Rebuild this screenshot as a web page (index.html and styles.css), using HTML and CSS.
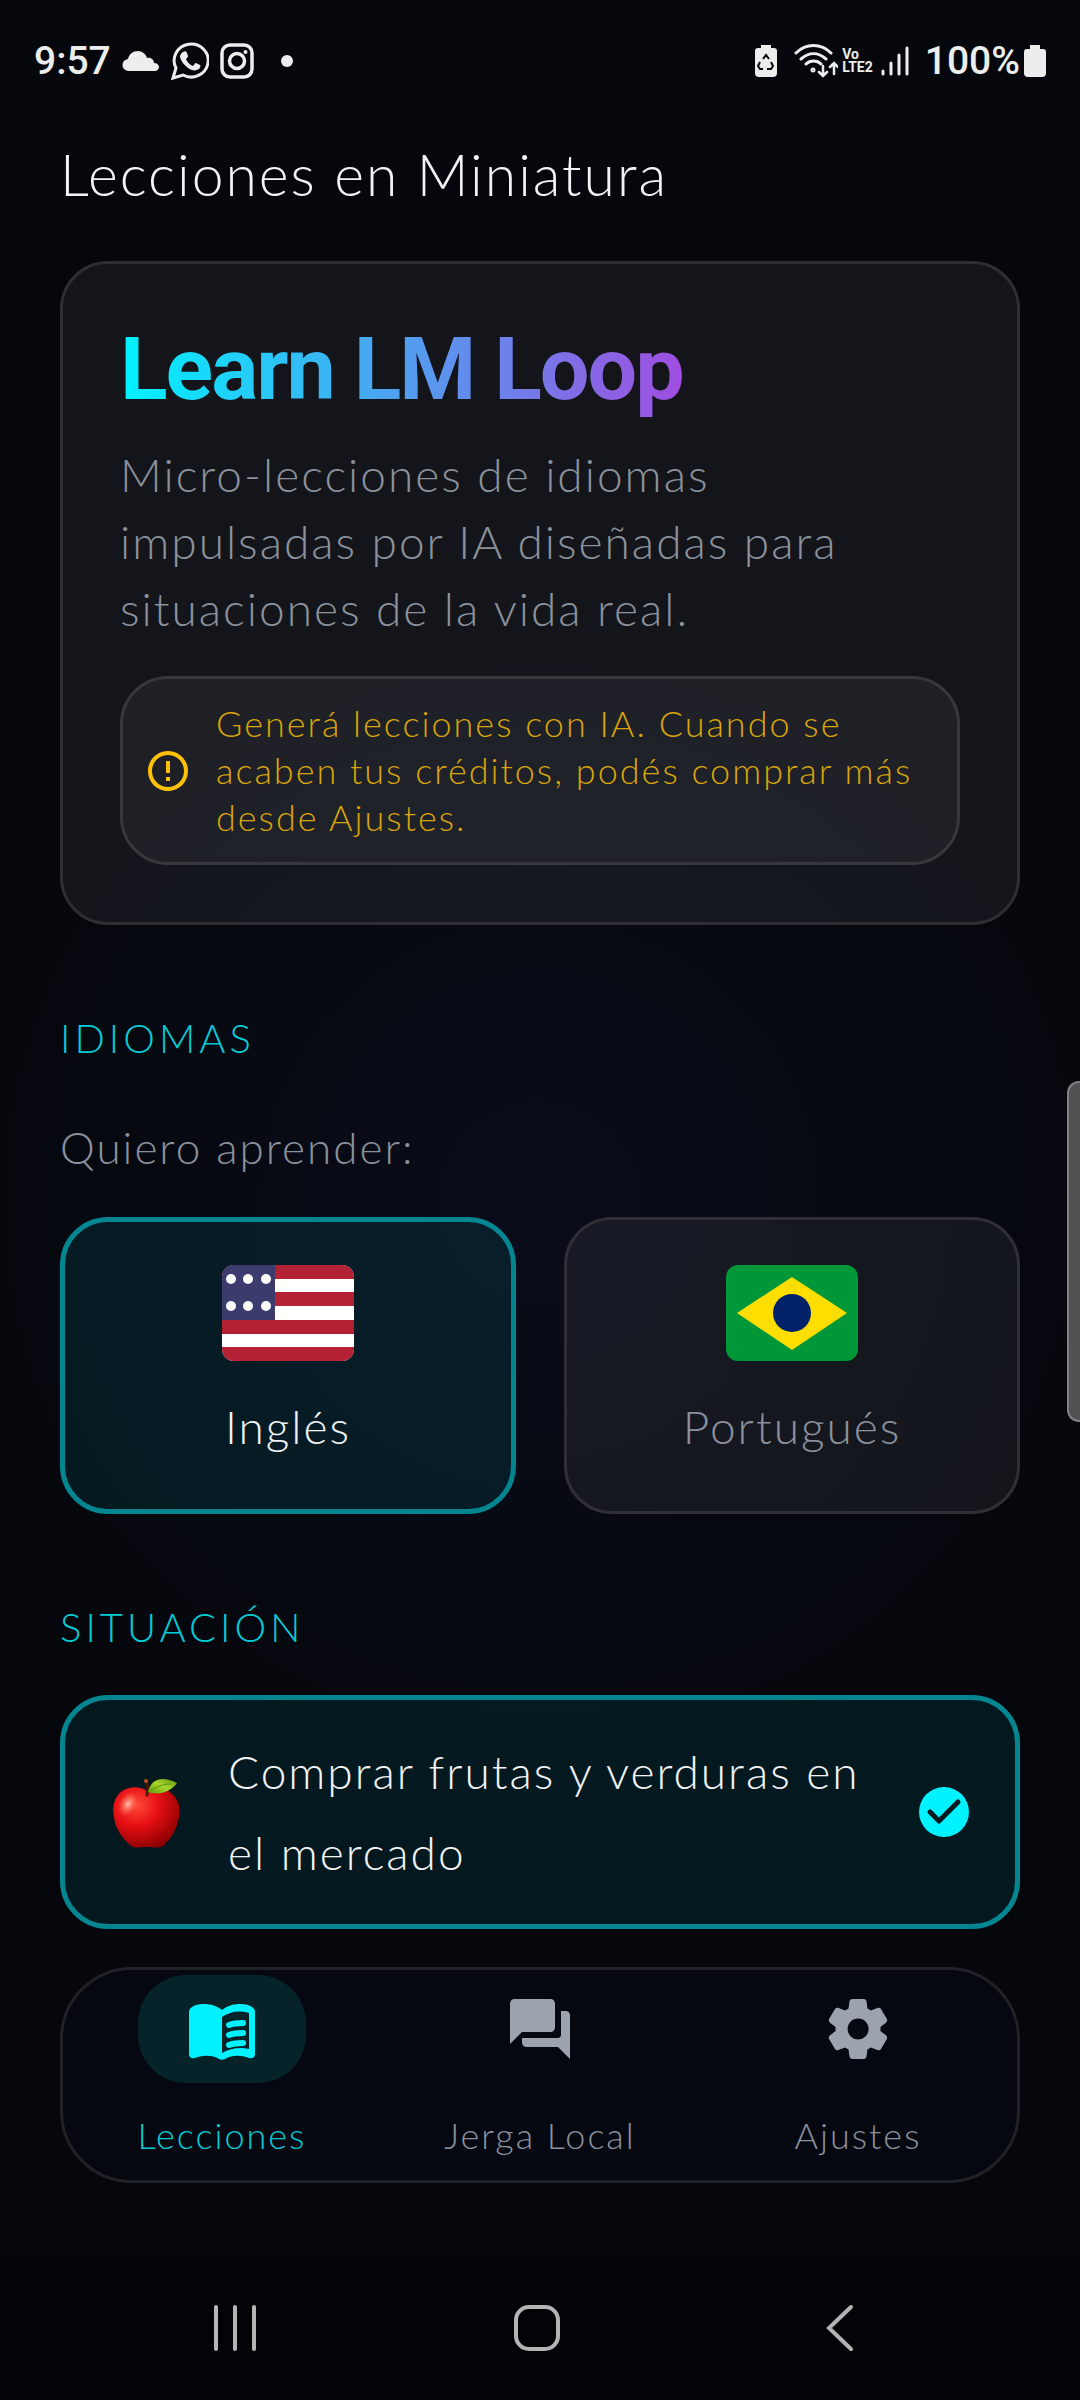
FILE: index.html
```
<!DOCTYPE html>
<html lang="es">
  <head>
    <meta charset="UTF-8" />
    <meta name="viewport" content="width=device-width, initial-scale=1.0" />
    <title>Learn LM Loop</title>
    <link rel="stylesheet" href="styles.css">
  </head>
  <body>
    <header class="status-bar">
      <div class="status-left">
        <span class="clock">9:57</span>
        <svg width="38" height="24" viewBox="0 0 38 24" fill="currentColor"><path d="M7 22a6 6 0 0 1-1-12C7 5 11 2 16 2c4 0 8 3 9 7 4-1 7 2 7 5 3 0 5 2 5 4s-2 4-4 4z" /></svg>
        <svg width="38" height="40" viewBox="0 0 38 40" fill="none" stroke="currentColor" stroke-width="3">
          <path d="M2 37l3-10A17 16.500 0 1 1 12 34z" />
          <path d="M12 11c2-1 3-1 4 1l1 3c0 1-1 2-2 3 1 3 4 6 7 7 1-1 2-3 3-3l4 2c1 1 0 3-1 4-3 2-7 2-11-1-4-3-7-7-8-11 0-2 1-4 3-5z" fill="currentColor" stroke="none" />
        </svg>
        <svg width="34" height="36" viewBox="0 0 34 36" fill="none" stroke="currentColor" stroke-width="3.500">
          <rect x="2" y="2" width="30" height="32" rx="8" />
          <circle cx="17" cy="18" r="7.500" />
          <circle cx="25.500" cy="9" r="2" fill="currentColor" stroke="none" />
        </svg>
        <span class="status-dot"></span>
      </div>
      <div class="status-right">
        <svg width="24" height="34" viewBox="0 0 24 34">
          <path d="M7 1h10v3h3a3 3 0 0 1 3 3v22a4 4 0 0 1-4 4H5a4 4 0 0 1-4-4V7a3 3 0 0 1 3-3h3z" fill="currentColor" />
          <path d="M9 15l3-4 3 4M17 18l2 4-2 3h-4M9 25H6l-2-3 2-4" fill="none" stroke="#05070c" stroke-width="2" />
        </svg>
        <svg class="wifi" width="44" height="36" viewBox="0 0 44 36" fill="none" stroke="currentColor" stroke-width="3" stroke-linecap="round">
          <path d="M2 10c10-10 25-10 35 0M7 16c8-7 17-7 25 0M12 21c4-4 11-4 15 0" />
          <circle cx="19" cy="27" r="1" />
          <path d="M29 23v10m-4-4l4 4 4-4M40 31V20m-4 4l4-4 4 4" stroke-width="2.500" />
        </svg>
        <span class="volte">Vo<br>LTE2</span>
        <svg class="signal" width="28" height="32" viewBox="0 0 28 32" stroke="currentColor" stroke-width="3" stroke-linecap="round"><path d="M2 26v3M10 18v11M18 10v19M26 3v26" /></svg>
        <span class="battery-level">100%</span>
        <svg width="22" height="34" viewBox="0 0 22 34" fill="currentColor"><path d="M6 1h10v4h3a3 3 0 0 1 3 3v21a4 4 0 0 1-4 4H4a4 4 0 0 1-4-4V8a3 3 0 0 1 3-3h3z" /></svg>
      </div>
    </header>

    <main class="content">
      <h2 class="page-title">Lecciones en Miniatura</h2>

      <section class="hero">
        <h1>Learn LM Loop</h1>
        <p class="lead">Micro-lecciones de idiomas impulsadas por IA diseñadas para situaciones de la vida real.</p>
        <div class="notice">
          <svg width="48" height="48" viewBox="0 0 24 24" fill="currentColor"><path d="M11 15h2v2h-2zm0-8h2v6h-2zm.99-5C6.470 2 2 6.480 2 12s4.470 10 9.990 10C17.520 22 22 17.520 22 12S17.520 2 11.990 2zM12 20c-4.420 0-8-3.580-8-8s3.580-8 8-8 8 3.580 8 8-3.580 8-8 8z" /></svg>
          <p>Generá lecciones con IA. Cuando se acaben tus créditos, podés comprar más desde Ajustes.</p>
        </div>
      </section>

      <h3 class="section-title">IDIOMAS</h3>
      <p class="question">Quiero aprender:</p>
      <div class="languages">
        <button class="language selected" type="button" aria-pressed="true">
          <svg class="flag" width="132" height="96" viewBox="0 0 132 96">
            <rect width="132" height="96" fill="#fff" />
            <path d="M0 0h132v14H0zM0 27h132v14H0zM0 55h132v14H0zM0 82h132v14H0z" fill="#b22234" />
            <rect width="53" height="55" fill="#3c3b6e" />
            <g fill="#fff">
              <circle cx="9" cy="14" r="5" /><circle cx="26" cy="14" r="5" /><circle cx="44" cy="14" r="5" />
              <circle cx="9" cy="41" r="5" /><circle cx="26" cy="41" r="5" /><circle cx="44" cy="41" r="5" />
            </g>
          </svg>
          <span>Inglés</span>
        </button>
        <button class="language" type="button" aria-pressed="false">
          <svg class="flag" width="132" height="96" viewBox="0 0 132 96">
            <rect width="132" height="96" fill="#009739" />
            <path d="M66 12l55 36-55 37-55-37z" fill="#fedd00" />
            <circle cx="66" cy="48" r="19" fill="#012169" />
          </svg>
          <span>Portugués</span>
        </button>
      </div>

      <h3 class="section-title">SITUACIÓN</h3>
      <button class="situation selected" type="button" aria-pressed="true">
        <svg class="apple" width="72" height="76" viewBox="0 0 72 76">
          <defs>
            <radialGradient id="skin" cx="0.35" cy="0.3" r="0.75">
              <stop offset="0" stop-color="#ff4a3a" />
              <stop offset="0.45" stop-color="#e60f14" />
              <stop offset="1" stop-color="#8c0000" />
            </radialGradient>
            <linearGradient id="leaf" x1="0" y1="1" x2="1" y2="0">
              <stop offset="0" stop-color="#5f9a10" />
              <stop offset="0.5" stop-color="#a9d62b" />
              <stop offset="1" stop-color="#5c9410" />
            </linearGradient>
            <radialGradient id="shine">
              <stop offset="0" stop-color="#ffc0b0" />
              <stop offset="1" stop-color="#ff6a4a" stop-opacity="0" />
            </radialGradient>
          </defs>
          <path d="M36 17c6-4 15-5 23 1 8 6 11 15 9 25-2 12-8 22-15 28-4 4-9 2-17 2s-13 2-17-2C11 64 4 54 3 43 1 33 3 23 11 17c8-5 18-5 25 0z" fill="url(#skin)" />
          <ellipse cx="17" cy="30" rx="9" ry="13" fill="url(#shine)" transform="rotate(30 17 30)" />
          <path d="M36 21c1-4 1-8 0-12" fill="none" stroke="#4a1608" stroke-width="3" stroke-linecap="round" />
          <circle cx="35" cy="7" r="2" fill="#b5551c" />
          <path d="M37 18c2-11 12-18 29-9-6 8-17 13-29 9z" fill="url(#leaf)" />
          <path d="M40 16c7-4 13-6 20-6" fill="none" stroke="#5c9410" />
        </svg>
        <span class="situation-name">Comprar frutas y verduras en el mercado</span>
        <svg class="check" width="50" height="50" viewBox="0 0 50 50">
          <circle cx="25" cy="25" r="25" fill="#00f2ff" />
          <path d="M11 25l9 9 19-19" fill="none" stroke="#06191f" stroke-width="5" stroke-linecap="round" stroke-linejoin="round" />
        </svg>
      </button>
    </main>

    <nav class="tabs">
      <a class="tab active" href="#">
        <span class="tab-icon">
          <svg width="72" height="72" viewBox="0 0 72 72">
            <path d="M36 17C29 10 12 9 6 14c-2 1-3 3-3 5v42c0 4 3 5 6 4 8-3 18-3 24 1 2 1 4 1 6 0 6-4 16-4 24-1 3 1 6 0 6-4V19c0-2-1-4-3-5-6-5-23-4-30 3z" fill="currentColor" />
            <path d="M36 24c7-5 17-7 27-4v36c-9-2-18-1-27 4z" fill="#07232a" />
            <path d="M43 32c5-2 10-2 14-2M43 42c5-2 10-2 14-2M43 52c5-2 10-2 14-2" fill="none" stroke="currentColor" stroke-width="6" stroke-linecap="round" />
          </svg>
        </span>
        <span>Lecciones</span>
      </a>
      <a class="tab" href="#">
        <span class="tab-icon">
          <svg width="72" height="72" viewBox="0 0 24 24" fill="currentColor"><path d="M21.500 6H19v8c0 .55-.45 1-1 1H6v1.500c0 .83.67 1.500 1.500 1.500H18l4 4V7.500c0-.83-.5-1.500-1.500-1.500zM17 11.500v-8c0-.83-.67-1.500-1.500-1.500h-12C2.670 2 2 2.670 2 3.500V17l4-4h9.500c.83 0 1.500-.67 1.500-1.500z" /></svg>
        </span>
        <span>Jerga Local</span>
      </a>
      <a class="tab" href="#">
        <span class="tab-icon">
          <svg width="72" height="72" viewBox="0 0 24 24" fill="currentColor"><path d="M19.500 12c0-.23-.01-.45-.03-.68l1.860-1.410c.4-.3.510-.86.260-1.300l-1.870-3.230c-.25-.44-.79-.62-1.250-.42l-2.150.91c-.37-.26-.76-.49-1.170-.68l-.29-2.310C14.800 2.380 14.370 2 13.870 2h-3.730c-.51 0-.94.38-1 .88l-.29 2.310c-.41.190-.8.420-1.170.68l-2.150-.91c-.46-.2-1-.02-1.250.42L2.410 8.620c-.25.440-.14.990.26 1.300l1.860 1.410c-.02.220-.03.440-.03.670s.01.450.03.680l-1.860 1.410c-.4.300-.51.860-.26 1.300l1.870 3.230c.25.440.79.620 1.250.42l2.150-.91c.37.260.76.490 1.170.68l.29 2.310c.06.500.49.880.99.880h3.730c.5 0 .93-.38.99-.88l.29-2.310c.41-.19.800-.42 1.170-.68l2.150.91c.46.200 1 .02 1.250-.42l1.870-3.230c.25-.44.140-.99-.26-1.300l-1.860-1.410c.03-.23.040-.45.040-.68zm-7.460 3.500c-1.930 0-3.500-1.570-3.500-3.500s1.570-3.500 3.500-3.500 3.500 1.570 3.500 3.500-1.570 3.500-3.500 3.500z" /></svg>
        </span>
        <span>Ajustes</span>
      </a>
    </nav>

    <footer class="system-nav">
      <button type="button" aria-label="Recientes">
        <svg width="44" height="48" viewBox="0 0 44 48" stroke="currentColor" stroke-width="4" stroke-linecap="round"><path d="M3 3v42M22 3v42M41 3v42" /></svg>
      </button>
      <button type="button" aria-label="Inicio">
        <svg width="48" height="48" viewBox="0 0 48 48" fill="none" stroke="currentColor" stroke-width="4"><rect x="3" y="3" width="42" height="42" rx="13" /></svg>
      </button>
      <button type="button" aria-label="Atrás">
        <svg width="48" height="48" viewBox="0 0 48 48" fill="none" stroke="currentColor" stroke-width="4" stroke-linecap="round"><path d="M36 3L14 24l22 21" /></svg>
      </button>
    </footer>

    <div class="edge-handle"></div>
  </body>
</html>
```
FILE: styles.css
```
* {
  box-sizing: border-box;
}

body {
  margin: 0;
  min-height: 100vh;
  display: flex;
  flex-direction: column;
  font-family: "Lato", sans-serif;
  font-weight: 300;
  letter-spacing: 2px;
  color: #f2f3f5;
  background: radial-gradient(circle 620px at 50% 50%, #0a0c1a, #05070c) #05070c;
}

h1,
h2,
h3,
p {
  margin: 0;
  font-weight: 300;
}

svg {
  display: block;
  flex-shrink: 0;
}

button {
  font: inherit;
  letter-spacing: inherit;
  color: inherit;
  background: none;
  border: none;
  padding: 0;
}

/* status bar */
.status-bar {
  display: flex;
  justify-content: space-between;
  align-items: center;
  height: 122px;
  padding: 0 34px;
  font-family: "Roboto", sans-serif;
  font-size: 39px;
  font-weight: 500;
  letter-spacing: 0;
  color: #eceeed;
}

.status-left,
.status-right {
  display: flex;
  align-items: center;
}

.status-left {
  gap: 11px;
}

.status-right {
  gap: 4px;
}

.status-dot {
  width: 12px;
  height: 12px;
  margin-left: 16px;
  border-radius: 50%;
  background: #eceeed;
}

.wifi {
  margin-left: 12px;
}

.volte {
  font-size: 14px;
  font-weight: 700;
  line-height: 13px;
}

.signal {
  margin: 0 12px 0 4px;
}

/* content */
.content {
  padding: 0 60px;
}

.page-title {
  margin: 16px 0 51px;
  font-size: 57px;
  line-height: 72px;
}

.hero {
  padding: 57px;
  border: 3px solid #2d2f33;
  border-radius: 48px;
  background: rgba(255, 255, 255, 0.06);
}

.hero h1 {
  width: fit-content;
  font-family: "Roboto", sans-serif;
  font-size: 88px;
  font-weight: 700;
  line-height: 96px;
  letter-spacing: -2px;
  color: transparent;
  background: linear-gradient(90deg, #00f2ff, #a04de0);
  background-clip: text;
  -webkit-background-clip: text;
}

.lead {
  margin: 24px 0 34px;
  padding-right: 60px;
  font-size: 46px;
  line-height: 67px;
  color: #8b919c;
}

.notice {
  display: flex;
  align-items: center;
  gap: 24px;
  padding: 21px;
  border: 3px solid #36383c;
  border-radius: 48px;
  background: rgba(255, 255, 255, 0.05);
  color: #ffc107;
}

.notice p {
  font-size: 36px;
  line-height: 47px;
  color: #d9a50b;
}

.section-title {
  margin-top: 83px;
  font-size: 40px;
  line-height: 60px;
  letter-spacing: 4px;
  color: #03ccd7;
}

.question {
  margin: 49px 0 40px;
  font-size: 44px;
  line-height: 60px;
  color: #8b919c;
}

.languages {
  display: grid;
  grid-template-columns: 1fr 1fr;
  gap: 48px;
}

.language {
  display: flex;
  flex-direction: column;
  align-items: center;
  gap: 36px;
  height: 297px;
  padding-top: 45px;
  border: 3px solid #2f3036;
  border-radius: 48px;
  background: rgba(255, 255, 255, 0.06);
  font-size: 46px;
  line-height: 60px;
  color: #8b919c;
}

.flag {
  border-radius: 12px;
}

.selected {
  border: 5px solid #038690;
  background: rgba(0, 242, 255, 0.08);
  color: #f2f3f5;
}

.language.selected {
  padding-top: 43px;
}

.situation {
  display: flex;
  align-items: center;
  width: 100%;
  margin-top: 38px;
  padding: 31px 46px;
  border-radius: 48px;
  font-size: 46px;
  line-height: 81px;
  text-align: left;
}

.situation-name {
  flex: 1;
  margin: 0 36px 0 45px;
}

/* bottom tabs */
.tabs {
  display: grid;
  grid-template-columns: repeat(3, 1fr);
  margin: 38px 60px 72px;
  padding: 5px 0 13px;
  border: 3px solid #202226;
  border-radius: 72px;
  background: #050810;
}

.tab {
  display: flex;
  flex-direction: column;
  align-items: center;
  gap: 20px;
  font-size: 36px;
  line-height: 64px;
  text-decoration: none;
  color: #8b919c;
}

.tab-icon {
  display: flex;
  align-items: center;
  justify-content: center;
  width: 168px;
  height: 108px;
  border-radius: 48px;
  color: #9ca3af;
}

.tab.active {
  color: #03ccd7;
}

.tab.active .tab-icon {
  background: #07232a;
  color: #00f2ff;
}

/* android buttons */
.system-nav {
  display: grid;
  grid-template-columns: repeat(3, 1fr);
  height: 144px;
  margin-top: auto;
  padding: 0 90px 0 84px;
  background: #030408;
  color: #b4b4b4;
}

.system-nav button {
  display: flex;
  align-items: center;
  justify-content: center;
}

/* side panel handle of the launcher */
.edge-handle {
  position: fixed;
  top: 1081px;
  right: 0;
  width: 13px;
  height: 341px;
  border: 2px solid #808183;
  border-right: none;
  border-radius: 12px 0 0 12px;
  background: #505153;
}
```
